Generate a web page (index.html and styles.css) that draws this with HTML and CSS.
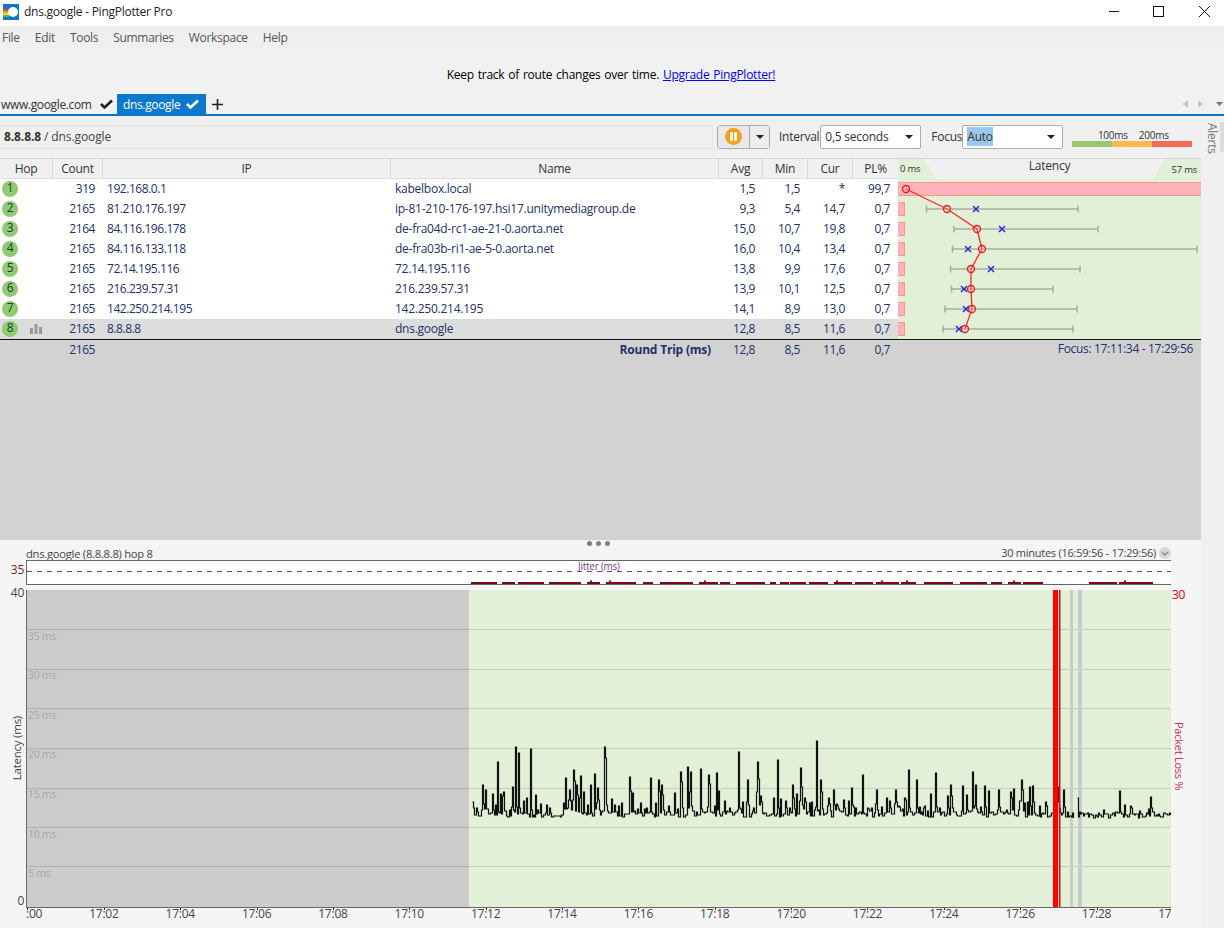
FILE: index.html
```html
<!DOCTYPE html>
<html lang="en">
<head>
<meta charset="utf-8">
<title>dns.google - PingPlotter Pro</title>
<link rel="stylesheet" href="styles.css">
</head>
<body>
<div class="app">
  <header class="titlebar">
    <svg class="appicon" width="16" height="16" viewBox="0 0 16 16"><rect width="16" height="16" fill="#0a78d2"/><rect y="5" width="6" height="2" fill="#e8452c"/><rect y="7" width="6" height="2" fill="#f59b1d"/><rect y="9" width="6" height="2" fill="#f3d81f"/><rect y="11" width="6" height="2" fill="#5fb846"/><rect y="13" width="6" height="2" fill="#0a78d2"/><circle cx="10" cy="8" r="5" fill="#fff"/></svg>
    <span class="title">dns.google - PingPlotter Pro</span>
    <div class="winctl">
      <svg width="44" height="20" viewBox="0 0 44 20"><path d="M17 10.500h10" stroke="#111" fill="none"/></svg>
      <svg width="44" height="20" viewBox="0 0 44 20"><rect x="17.500" y="5.500" width="10" height="10" stroke="#111" fill="none"/></svg>
      <svg class="closeicon" width="44" height="20" viewBox="0 0 44 20"><path d="M17 5l11 11M28 5L17 16" stroke="#111" fill="none"/></svg>
    </div>
  </header>
  <nav class="menubar"><span>File</span><span>Edit</span><span>Tools</span><span>Summaries</span><span>Workspace</span><span>Help</span></nav>
  <div class="banner">Keep track of route changes over time. <a href="#">Upgrade PingPlotter!</a></div>
  <div class="tabs">
    <div class="tab"><span>www.google.com</span><svg width="13" height="10" viewBox="0 0 13 10"><path d="M1 5l3.500 3.500L12 1.500" stroke="#222" stroke-width="2.600" fill="none"/></svg></div>
    <div class="tab active"><span>dns.google</span><svg width="13" height="10" viewBox="0 0 13 10"><path d="M1 5l3.500 3.500L12 1.500" stroke="#fff" stroke-width="2.600" fill="none"/></svg></div>
    <svg class="plus" width="11" height="11" viewBox="0 0 11 11"><path d="M5.500 0v11M0 5.500h11" stroke="#222" stroke-width="1.600"/></svg>
    <div class="tabnav">
      <svg width="6" height="8" viewBox="0 0 6 8"><path d="M5 0v8L0 4z" fill="#c4c4c4"/></svg>
      <svg width="6" height="8" viewBox="0 0 6 8"><path d="M1 0v8l5-4z" fill="#c4c4c4"/></svg>
      <svg width="7" height="4" viewBox="0 0 7 4"><path d="M0 0h7L3.500 4z" fill="#777"/></svg>
    </div>
  </div>
  <div class="main">
    <div class="content">
      <div class="toolbar">
        <div class="target"><b>8.8.8.8</b> / dns.google</div>
        <div class="pausebtn">
          <span class="pausecell"><svg width="17" height="17" viewBox="0 0 17 17"><circle cx="8.500" cy="8.500" r="8.500" fill="#f7a11a"/><rect x="5" y="4" width="2.800" height="9" rx="1" fill="#fff"/><rect x="9.200" y="4" width="2.800" height="9" rx="1" fill="#fff"/></svg></span>
          <span class="dropcell"><i class="caret"></i></span>
        </div>
        <label class="lbl lbl-int">Interval</label>
        <div class="select sel-int"><span>0,5 seconds</span><i class="caret"></i></div>
        <label class="lbl lbl-foc">Focus</label>
        <div class="select sel-foc"><span class="hl">Auto</span><i class="caret"></i></div>
        <div class="legend">
          <div class="legend-labels"><span>100ms</span><span>200ms</span></div>
          <div class="legend-bar"><i class="g"></i><i class="o"></i><i class="r"></i></div>
        </div>
      </div>
      <div class="route">
        <div class="grid">
          <div class="row head"><span>Hop</span><span>Count</span><span>IP</span><span>Name</span><span>Avg</span><span>Min</span><span>Cur</span><span>PL%</span></div>
          <div class="row"><span class="hop"><b>1</b></span><span class="num">319</span><span class="ip">192.168.0.1</span><span class="nm">kabelbox.local</span><span class="num">1,5</span><span class="num">1,5</span><span class="num">*</span><span class="num">99,7</span></div>
          <div class="row"><span class="hop"><b>2</b></span><span class="num">2165</span><span class="ip">81.210.176.197</span><span class="nm">ip-81-210-176-197.hsi17.unitymediagroup.de</span><span class="num">9,3</span><span class="num">5,4</span><span class="num">14,7</span><span class="num">0,7</span></div>
          <div class="row"><span class="hop"><b>3</b></span><span class="num">2164</span><span class="ip">84.116.196.178</span><span class="nm">de-fra04d-rc1-ae-21-0.aorta.net</span><span class="num">15,0</span><span class="num">10,7</span><span class="num">19,8</span><span class="num">0,7</span></div>
          <div class="row"><span class="hop"><b>4</b></span><span class="num">2165</span><span class="ip">84.116.133.118</span><span class="nm">de-fra03b-ri1-ae-5-0.aorta.net</span><span class="num">16,0</span><span class="num">10,4</span><span class="num">13,4</span><span class="num">0,7</span></div>
          <div class="row"><span class="hop"><b>5</b></span><span class="num">2165</span><span class="ip">72.14.195.116</span><span class="nm">72.14.195.116</span><span class="num">13,8</span><span class="num">9,9</span><span class="num">17,6</span><span class="num">0,7</span></div>
          <div class="row"><span class="hop"><b>6</b></span><span class="num">2165</span><span class="ip">216.239.57.31</span><span class="nm">216.239.57.31</span><span class="num">13,9</span><span class="num">10,1</span><span class="num">12,5</span><span class="num">0,7</span></div>
          <div class="row"><span class="hop"><b>7</b></span><span class="num">2165</span><span class="ip">142.250.214.195</span><span class="nm">142.250.214.195</span><span class="num">14,1</span><span class="num">8,9</span><span class="num">13,0</span><span class="num">0,7</span></div>
          <div class="row selected"><span class="hop"><b>8</b><svg class="bars" width="12" height="10" viewBox="0 0 12 10"><path d="M0 4h3v6H0zM4.500 0h3v10h-3zM9 3h3v7H9z" fill="#999"/></svg></span><span class="num">2165</span><span class="ip">8.8.8.8</span><span class="nm">dns.google</span><span class="num">12,8</span><span class="num">8,5</span><span class="num">11,6</span><span class="num">0,7</span></div>
        </div>
        <div class="latency">
          <svg width="303" height="181" viewBox="898 158 303 181">
            <rect x="898" y="158" width="303" height="181" fill="#e1f0d7"/>
            <path d="M923 158L937 179H1153L1165 158z" fill="#f0f0f0"/>
            <rect x="898" y="158" width="303" height="1" fill="#d4d4d4"/>
            <text x="900" y="172" class="lat-sm">0 ms</text>
            <text x="1049.500" y="170" class="lat-title" text-anchor="middle">Latency</text>
            <text x="1197" y="173" class="lat-sm" text-anchor="end">57 ms</text>
            <rect x="898" y="182.500" width="304" height="13" fill="#ffb2bb" stroke="#f59a85"/>
            <g fill="#ffb2bb" stroke="#f59a85"><rect x="897.500" y="202.500" width="7" height="13"/><rect x="897.500" y="222.500" width="7" height="13"/><rect x="897.500" y="242.500" width="7" height="13"/><rect x="897.500" y="262.500" width="7" height="13"/><rect x="897.500" y="282.500" width="7" height="13"/><rect x="897.500" y="302.500" width="7" height="13"/><rect x="897.500" y="322.500" width="7" height="13"/></g>
            <g class="rng"><path d="M926.500 209H1078M926.500 205.500v7M1078 205.500v7"/><path d="M954 229H1098M954 225.500v7M1098 225.500v7"/><path d="M952.500 249H1197M952.500 245.500v7M1197 245.500v7"/><path d="M950.500 269H1080M950.500 265.500v7M1080 265.500v7"/><path d="M951.500 289H1053M951.500 285.500v7M1053 285.500v7"/><path d="M945 309H1077M945 305.500v7M1077 305.500v7"/><path d="M943 329H1073M943 325.500v7M1073 325.500v7"/></g>
            <g class="xs"><path d="M973 206l6 6M979 206l-6 6"/><path d="M999 226l6 6M1005 226l-6 6"/><path d="M965 246l6 6M971 246l-6 6"/><path d="M988 266l6 6M994 266l-6 6"/><path d="M961 286l6 6M967 286l-6 6"/><path d="M963 306l6 6M969 306l-6 6"/><path d="M956 326l6 6M962 326l-6 6"/></g>
            <polyline class="trace" points="906,189 947,209 977,229 982,249 971,269 971,289 972,309 965,329"/>
            <g class="dots"><circle cx="906" cy="189" r="3.500"/><circle cx="947" cy="209" r="3.500"/><circle cx="977" cy="229" r="3.500"/><circle cx="982" cy="249" r="3.500"/><circle cx="971" cy="269" r="3.500"/><circle cx="971" cy="289" r="3.500"/><circle cx="972" cy="309" r="3.500"/><circle cx="965" cy="329" r="3.500"/></g>
          </svg>
        </div>
      </div>
      <div class="summary">
        <div class="row sumrow"><span></span><span class="num">2165</span><span></span><span class="num rt">Round Trip (ms)</span><span class="num">12,8</span><span class="num">8,5</span><span class="num">11,6</span><span class="num">0,7</span></div>
        <div class="focus">Focus: 17:11:34 - 17:29:56</div>
      </div>
      <div class="grip"><i></i><i></i><i></i></div>
      <div class="graph-head"><span>dns.google (8.8.8.8) hop 8</span><span class="range">30 minutes (16:59:56 - 17:29:56) <svg width="12" height="12" viewBox="0 0 12 12"><circle cx="6" cy="6" r="6" fill="#d8d8d8"/><path d="M3 5l3 3 3-3" stroke="#888" fill="none" stroke-width="1.300"/></svg></span></div>
      <div class="jitter-row">
        <span class="jit-val">35</span>
        <div class="jitter">
          <svg id="jitter" width="1144" height="23" viewBox="0 0 1144 23">
            <path d="M0 10.500H1144" stroke="#555" stroke-dasharray="5 5" fill="none"/>
          </svg>
          <span class="jit-title">Jitter (ms)</span>
        </div>
      </div>
      <div class="plot-row">
        <div class="yaxis"><span>40</span><span class="yname">Latency (ms)</span><span>0</span></div>
        <svg id="plot" class="plot" width="1145" height="318" viewBox="26 590 1145 318">
          <rect x="26" y="590" width="1145" height="317" fill="#e1f0d7"/>
          <rect x="26" y="590" width="443" height="317" fill="#cbcbcb"/>
          <g stroke="#000" stroke-opacity=".13"><path d="M26 629.500H1171M26 669.500H1171M26 708.500H1171M26 748.500H1171M26 788.500H1171M26 827.500H1171M26 866.500H1171"/></g>
          <g class="gridlbl"><text x="28" y="640">35 ms</text><text x="28" y="679">30 ms</text><text x="28" y="719">25 ms</text><text x="28" y="758">20 ms</text><text x="28" y="798">15 ms</text><text x="28" y="838">10 ms</text><text x="28" y="877">5 ms</text></g>
          <rect x="1070" y="590" width="3" height="317" fill="#cbcbcb"/><rect x="1078" y="590" width="4" height="317" fill="#cbcbcb"/>
          <path id="trace" fill="none" stroke="#111" stroke-width="1.200"/>
          <rect x="1053" y="590" width="5" height="317" fill="#f00"/><rect x="1059" y="590" width="1.500" height="317" fill="#f00"/>
          <path d="M26.500 590V907.500H1171" stroke="#666" fill="none"/>
        </svg>
        <div class="ploss"><span>30</span><span class="plname">Packet Loss %</span><span></span></div>
      </div>
      <div class="xaxis"><div class="xticks"><span>17:00</span><span>17:02</span><span>17:04</span><span>17:06</span><span>17:08</span><span>17:10</span><span>17:12</span><span>17:14</span><span>17:16</span><span>17:18</span><span>17:20</span><span>17:22</span><span>17:24</span><span>17:26</span><span>17:28</span><span>17:30</span></div></div>
    </div>
    <aside class="rail"><span class="alerts">Alerts</span><i class="thumb"></i></aside>
  </div>
</div>
<script src="chart.js"></script>
</body>
</html>
```
FILE: styles.css
```css
* { box-sizing: border-box; }
html, body { margin: 0; padding: 0; }
body { background: #f5f5f5; font-family: "Open Sans", "Noto Sans", sans-serif; font-size: 12px; letter-spacing: -0.25px; color: #333; }
svg { display: block; }
.app { width: 1224px; height: 928px; overflow: hidden; display: flex; flex-direction: column; }

.titlebar { height: 26px; background: #fff; display: flex; align-items: center; flex: none; position: relative; }
.appicon { margin: -2px 5px 0 3px; }
.title { color: #222; margin-top: -3px; }
.winctl { margin-left: auto; display: flex; margin-right: -2px; margin-top: -5px; }
.closeicon { margin-left: 2px; }

.menubar { height: 24px; background: #efefef; display: flex; gap: 15px; padding-left: 2px; align-items: center; color: #555; flex: none; padding-bottom: 2px; letter-spacing: -0.3px; }
.banner { height: 44px; background: #f1f1f1; flex: none; text-align: center; padding-top: 16px; padding-right: 2px; color: #000; word-spacing: 1px; }
.banner a { color: #00e; }

.tabs { height: 22px; background: #f1f1f1; border-bottom: 2px solid #0a78cc; display: flex; align-items: center; flex: none; font-size: 12px; letter-spacing: -0.35px; }
.tab { height: 20px; display: flex; align-items: center; gap: 8px; padding-left: 1px; width: 117px; color: #333; flex: none; }
.tab.active { background: #0a78cc; color: #fff; width: 89px; padding-left: 6px; gap: 6px; }
.plus { margin-left: 6px; }
.tabnav { margin-left: auto; display: flex; align-items: center; gap: 8px; margin-right: 1px; }
.tabnav svg:last-child { margin-left: 5px; }

.main { flex: 1; display: flex; min-height: 0; }
.content { width: 1201px; flex: none; display: flex; flex-direction: column; }
.rail { flex: 1; background: #f0f0f0; position: relative; padding: 7px 0 0 3px; }
.alerts { writing-mode: vertical-rl; color: #777; font-size: 12px; }
.thumb { position: absolute; right: 0; top: 6px; width: 4px; height: 30px; background: #dcdcdc; }

.toolbar { height: 42px; background: #f0f0f0; display: flex; align-items: center; flex: none; padding-bottom: 1px; }
.target { width: 713px; height: 24px; border: 1px solid #e4e4e4; border-left: 0; padding-left: 4px; line-height: 22px; color: #444; letter-spacing: -0.1px; }
.target b { color: #333; }
.pausebtn { margin-left: 4px; width: 53px; height: 24px; border: 1px solid #aaa; border-radius: 3px; display: flex; background: #e6e6e6; }
.pausecell { width: 31px; display: flex; align-items: center; justify-content: center; background: #e8e8e8; }
.dropcell { flex: 1; border-left: 1px solid #aaa; display: flex; align-items: center; justify-content: center; background: #ececec; }
.caret { display: block; width: 0; height: 0; border: 4px solid transparent; border-top: 4px solid #222; border-bottom: 0; }
.lbl { color: #333; }
.lbl-int { margin-left: 9px; margin-right: 1px; }
.lbl-foc { margin-left: 10px; margin-right: 0; }
.select { height: 24px; border: 1px solid #aaa; border-radius: 2px; background: #fff; display: flex; align-items: center; justify-content: space-between; padding: 0 7px 0 4px; color: #333; }
.sel-int { width: 101px; }
.sel-foc { width: 101px; }
.hl { background: #9bc8ef; padding: 1px 0; }
.legend { width: 120px; margin-left: 9px; padding-top: 3px; }
.legend-labels { display: flex; gap: 11px; justify-content: center; font-size: 10px; line-height: 11px; color: #333; padding-left: 2px; }
.legend-bar { display: flex; height: 6px; }
.legend-bar i { flex: 1; }
.legend-bar .g { background: #97c76f; }
.legend-bar .o { background: #fdb94f; }
.legend-bar .r { background: #fb6a55; }

.route { display: flex; height: 181px; flex: none; }
.grid { width: 898px; background: #fff; flex: none; }
.row { display: grid; grid-template-columns: 53px 50px 288px 328px 44px 45px 45px 45px; height: 20px; line-height: 20px; color: #22316a; }
.row.head { height: 21px; background: #f0f0f0; border-top: 1px solid #d4d4d4; border-bottom: 1px solid #ddd; color: #333; text-align: center; line-height: 20px; }
.row.head span { border-right: 1px solid #d9d9d9; height: 19px; }
.row.head span:last-child { border-right: 0; }
.num { text-align: right; padding-right: 8px; letter-spacing: -0.45px; }
.ip { padding-left: 4px; letter-spacing: -0.45px; }
.nm { padding-left: 4px; }
.hop { display: flex; align-items: center; padding-left: 2px; gap: 12px; }
.hop b { width: 16px; height: 16px; border-radius: 50%; background: #8fcb72; font-weight: 400; text-align: center; line-height: 14px; color: #1f3a3a; flex: none; }
.row.selected { background: #dcdcdc; }
.latency { width: 303px; flex: none; }
.lat-sm { font-size: 9.500px; fill: #333; }
.lat-title { font-size: 12px; fill: #333; }
.rng { stroke: #a6aca2; stroke-width: 1.500; fill: none; }
.xs { stroke: #1a22e0; stroke-width: 1.400; fill: none; }
.trace { stroke: #f92a2a; stroke-width: 1.300; fill: none; }
.dots { stroke: #f01818; stroke-width: 1.300; fill: #ffb2bb; fill-opacity: .25; }

.summary { height: 201px; background: #d2d2d2; border-top: 1px solid #111; flex: none; display: flex; position: relative; }
.sumrow { flex: none; width: 898px; }
.row .rt { font-weight: 700; color: #22316a; letter-spacing: -0.2px; }
.focus { margin-left: auto; padding-right: 8px; line-height: 18px; color: #22316a; letter-spacing: -0.32px; }

.grip { height: 6px; display: flex; gap: 4px; justify-content: center; align-items: center; padding-right: 5px; flex: none; }
.grip i { width: 5px; height: 5px; border-radius: 50%; background: #808080; margin-top: 1px; }
.graph-head { height: 13px; padding-top: 1px; display: flex; justify-content: space-between; margin-left: 26px; width: 1146px; color: #444; line-height: 14px; flex: none; font-size: 11.200px; }
.range { display: flex; align-items: center; gap: 3px; margin-right: 1px; font-size: 11px; height: 12px; }
.jitter-row { display: flex; height: 25px; flex: none; margin-top: 1px; }
.jit-val { width: 26px; text-align: right; padding-right: 2px; color: #8a1a1a; line-height: 20px; }
.jitter { width: 1145px; height: 25px; border-top: 1px solid #666; border-bottom: 1px solid #666; border-left: 1px solid #666; background: #fff; position: relative; }
.jit-title { position: absolute; left: 550px; top: -1px; font-size: 10px; color: #7a3a7a; line-height: 12px; padding: 0 1px; }
.plot-row { display: flex; height: 318px; margin-top: 5px; flex: none; }
.yaxis { width: 26px; flex: none; display: flex; flex-direction: column; justify-content: space-between; align-items: flex-end; padding: 0 2px 0 0; height: 324px; margin-top: -5px; color: #444; line-height: 16px; }
.yname { writing-mode: vertical-rl; transform: rotate(180deg); align-self: center; font-size: 11.500px; margin-top: 2px; margin-left: 10px; }
.plot { flex: none; }
.gridlbl text { font-size: 10.500px; fill: #a8a8a8; }
.ploss { width: 30px; height: 318px; margin-top: -2px; color: #d4001a; display: flex; flex-direction: column; justify-content: space-between; padding-left: 1px; line-height: 14px; }
.plname { writing-mode: vertical-rl; align-self: flex-start; font-size: 11px; color: #c2304c; margin-top: 4px; }
.xaxis { margin-left: 26px; margin-top: -3px; width: 1145px; overflow: hidden; height: 20px; flex: none; position: relative; }
.xticks { display: flex; margin-left: -36.700px; width: 1300px; }
.xticks span { width: 76.360px; flex: none; text-align: center; color: #444; line-height: 17px; position: relative; }
.xticks span::before { content: ""; position: absolute; left: 50%; top: 3px; width: 1px; height: 2px; background: #222; }
```
FILE: chart.js
```js
(function () {
  var seed = 23;
  function rnd() { seed = (seed * 16807) % 2147483647; return seed / 2147483647; }
  var peaks = {475:772,482:785,485:790,497:762,498:762,503:792,508:771,512:787,515:747,518:753,530:749,535:795,552:768,558:788,565:778,569:790,573:770,576:785,580:776,590:785,594:774,597:788,604:747,606:770,620:790,629:777,632:793,650:778,658:780,661:785,680:772,684:780,687:767,690:772,700:769,703:790,708:775,716:773,723:778,731:788,738:752,747:780,757:762,770:773,777:760,784:772,792:785,800:768,808:776,816:741,820:780,825:778,833:790,842:782,851:788,862:775,880:783,895:790,908:770,916:780,926:785,935:773,950:785,960:790,972:772,984:786,998:790,1010:792,1021:780,1029:787,1032:786,1034:790,1044:802,1057:787,1063:790,1077:798,1100:797,1119:791,1141:795,1150:797,1168:805};
  var d = "", x = 472, pen = false, level = 814;
  function to(xp, yp) {
    if (!pen) { d += "M" + xp + " " + yp; pen = true; }
    else d += "H" + xp + "V" + yp;
  }
  while (x <= 1170) {
    if (x >= 1074 && x <= 1076) { pen = false; x++; continue; }
    var late = x > 1030;
    var base = 811 + Math.round(rnd() * 6) + (late ? 1 : 0);
    if (peaks[x]) {
      to(x + 0.5, peaks[x]);
      if (rnd() < 0.4) { x += 1; to(x + 0.5, peaks[x - 1] + 6 + Math.round(rnd() * 14)); }
      x += 1;
      to(x + 0.5, 805 + Math.round(rnd() * 8));
      x += 1;
      continue;
    }
    if (rnd() < (late ? 0.2 : 0.38)) {
      to(x + 0.5, base - 4 - Math.round(rnd() * rnd() * (late ? 10 : 26)));
      x += 1;
    } else {
      to(x + 0.5, base);
      x += 1 + Math.round(rnd());
    }
  }
  document.getElementById("trace").setAttribute("d", d);

  var svg = document.getElementById("jitter"), ns = "http://www.w3.org/2000/svg", jp = "", jx = 444;
  while (jx < 1125) {
    var w = 4 + Math.round(rnd() * 30);
    jp += "M" + jx + " 22h" + w;
    if (rnd() < 0.4) jp += "M" + (jx + 2 + Math.round(rnd() * 3)) + " 20.500h2";
    jx += w + 1 + Math.round(rnd() * 7);
    if (jx > 1020 && jx < 1060) jx = 1062;
  }
  var p = document.createElementNS(ns, "path");
  p.setAttribute("d", jp);
  p.setAttribute("stroke", "#7c0a0a");
  p.setAttribute("stroke-width", "2");
  p.setAttribute("fill", "none");
  svg.appendChild(p);
})();
```
